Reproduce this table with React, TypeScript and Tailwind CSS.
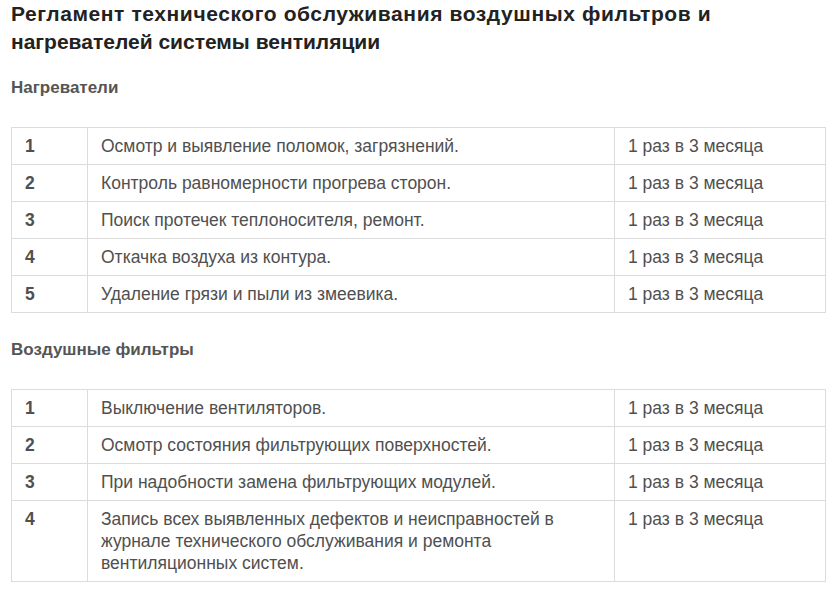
import React, { FC } from "react";

type Row = { n: string; task: string; period: string };

const HEATERS: Row[] = [
  { n: "1", task: "Осмотр и выявление поломок, загрязнений.", period: "1 раз в 3 месяца" },
  { n: "2", task: "Контроль равномерности прогрева сторон.", period: "1 раз в 3 месяца" },
  { n: "3", task: "Поиск протечек теплоносителя, ремонт.", period: "1 раз в 3 месяца" },
  { n: "4", task: "Откачка воздуха из контура.", period: "1 раз в 3 месяца" },
  { n: "5", task: "Удаление грязи и пыли из змеевика.", period: "1 раз в 3 месяца" },
];

const FILTERS: Row[] = [
  { n: "1", task: "Выключение вентиляторов.", period: "1 раз в 3 месяца" },
  { n: "2", task: "Осмотр состояния фильтрующих поверхностей.", period: "1 раз в 3 месяца" },
  { n: "3", task: "При надобности замена фильтрующих модулей.", period: "1 раз в 3 месяца" },
  {
    n: "4",
    task: "Запись всех выявленных дефектов и неисправностей в журнале технического обслуживания и ремонта вентиляционных систем.",
    period: "1 раз в 3 месяца",
  },
];

const ScheduleTable: FC<{ rows: Row[] }> = ({ rows }) => {
  return (
    <table className="w-[814px] table-fixed border-collapse border border-[#dcdcdc]">
      <colgroup>
        <col className="w-[76px]" />
        <col className="w-[527px]" />
        <col className="w-[211px]" />
      </colgroup>
      <tbody>
        {rows.map((row) => (
          <tr key={row.n}>
            <td className="border border-[#dcdcdc] px-[13px] py-[7px] align-top font-bold leading-[22px]">
              {row.n}
            </td>
            <td className="border border-[#dcdcdc] px-[13px] py-[7px] align-top leading-[22px]">
              {row.task}
            </td>
            <td className="border border-[#dcdcdc] px-[13px] py-[7px] align-top leading-[22px]">
              {row.period}
            </td>
          </tr>
        ))}
      </tbody>
    </table>
  );
};

export default function App() {
  return (
    <div className="w-[836px] h-[599px] bg-white pl-[11px] text-[17.5px] text-[#505050] font-['Liberation_Sans',Arial,sans-serif]">
      <h1 className="text-[21px] font-bold leading-[28px] text-[#222]">
        <span className="block tracking-[0.6px]">
          Регламент технического обслуживания воздушных фильтров и
        </span>
        <span className="block">нагревателей системы вентиляции</span>
      </h1>
      <h2 className="mt-[21px] text-[17px] font-bold leading-[22px] text-[#555]">Нагреватели</h2>
      <div className="mt-[28px]">
        <ScheduleTable rows={HEATERS} />
      </div>
      <h2 className="mt-[26px] text-[17px] font-bold leading-[22px] text-[#555]">Воздушные фильтры</h2>
      <div className="mt-[28px]">
        <ScheduleTable rows={FILTERS} />
      </div>
    </div>
  );
}
